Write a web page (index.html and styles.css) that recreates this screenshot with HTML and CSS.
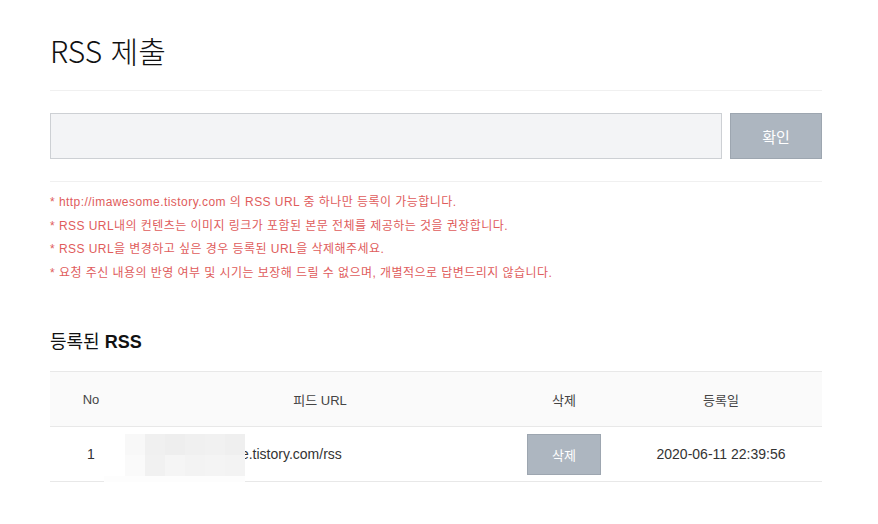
FILE: index.html
```html
<!DOCTYPE html>
<html lang="ko">
<head>
<meta charset="utf-8">
<title>RSS 제출</title>
<link rel="stylesheet" href="styles.css">
</head>
<body>
<div class="page">
  <h1 class="title">RSS 제출</h1>
  <div class="form-row">
    <input class="url-input" type="text">
    <button class="btn-confirm">확인</button>
  </div>
  <ul class="notes">
    <li>* http://imawesome.tistory.com 의 RSS URL 중 하나만 등록이 가능합니다.</li>
    <li>* RSS URL내의 컨텐츠는 이미지 링크가 포함된 본문 전체를 제공하는 것을 권장합니다.</li>
    <li>* RSS URL을 변경하고 싶은 경우 등록된 URL을 삭제해주세요.</li>
    <li>* 요청 주신 내용의 반영 여부 및 시기는 보장해 드릴 수 없으며, 개별적으로 답변드리지 않습니다.</li>
  </ul>
  <h2 class="subtitle">등록된 <span class="latin">RSS</span></h2>
  <table class="rss-table">
    <colgroup>
      <col class="c-no"><col class="c-url"><col class="c-del"><col class="c-date">
    </colgroup>
    <thead>
      <tr><th>No</th><th>피드 URL</th><th>삭제</th><th>등록일</th></tr>
    </thead>
    <tbody>
      <tr>
        <td>1</td>
        <td class="url-cell">http://imawesome.tistory.com/rss
          <div class="mosaic">
            <span class="m1"></span><span class="m2"></span><span class="m3"></span><span class="m4"></span><span class="m5"></span><span class="m6"></span>
            <span class="m7"></span><span class="m8"></span><span class="m9"></span><span class="m10"></span><span class="m11"></span><span class="m12"></span>
          </div>
          <div class="mosaic-low"></div>
        </td>
        <td><button class="btn-del">삭제</button></td>
        <td>2020-06-11 22:39:56</td>
      </tr>
    </tbody>
  </table>
</div>
</body>
</html>
```
FILE: styles.css
```css
* { box-sizing: border-box; }
html, body { margin: 0; padding: 0; background: #fff; }
body {
  font-family: "Liberation Sans", "Noto Sans CJK KR", sans-serif;
  color: #333;
}
.page {
  padding: 0 56px 0 50px;
}
.title {
  margin: 0;
  padding: 28px 0 18px;
  font-family: "Noto Sans CJK KR", sans-serif;
  font-weight: 300;
  font-size: 30px;
  line-height: 44px;
  color: #111;
  border-bottom: 1px solid #f0f0f0;
}
.form-row {
  display: flex;
  gap: 8px;
  padding: 22px 0 22px;
  border-bottom: 1px solid #f0f0f0;
}
.url-input {
  flex: 1;
  height: 46px;
  margin: 0;
  border: 1px solid #cdd0d4;
  background: #f3f4f6;
  outline: none;
}
.btn-confirm {
  width: 92px;
  height: 46px;
  margin: 0;
  border: 1px solid #9da6b0;
  background: #adb6c0;
  color: #fff;
  font-family: "Noto Sans CJK KR", sans-serif;
  font-size: 15px;
  cursor: pointer;
}
.notes {
  list-style: none;
  margin: 0;
  padding: 9px 0 0;
  color: #e05c5c;
  font-size: 12px;
  line-height: 23.5px;
  letter-spacing: 0.45px;
}
.subtitle {
  margin: 0;
  padding: 41px 0 15px;
  font-family: "Noto Sans CJK KR", sans-serif;
  font-weight: 400;
  font-size: 18px;
  line-height: 28px;
  color: #111;
}
.subtitle .latin {
  font-family: "Liberation Sans", sans-serif;
  font-weight: 700;
}
.rss-table {
  width: 100%;
  border-collapse: collapse;
  table-layout: fixed;
  font-size: 14px;
}
.c-no { width: 82px; }
.c-url { width: 376px; }
.c-del { width: 112px; }
.c-date { width: 202px; }
.rss-table th {
  height: 55px;
  background: #fafafa;
  border-top: 1px solid #e8e8e8;
  border-bottom: 1px solid #e8e8e8;
  font-weight: 400;
  font-size: 13px;
  color: #444;
  text-align: center;
  padding: 0;
}
.rss-table td {
  height: 55px;
  border-bottom: 1px solid #e8e8e8;
  text-align: center;
  padding: 0;
  color: #333;
}
.rss-table td.url-cell {
  position: relative;
  text-align: left;
  padding-left: 7px;
}
.mosaic {
  position: absolute;
  left: -7px;
  top: 7px;
  width: 120px;
  height: 42px;
  display: grid;
  grid-template-columns: repeat(6, 1fr);
  grid-template-rows: repeat(2, 1fr);
}
.mosaic span { display: block; }
.m1 { background: #f8f8f8; }
.m2 { background: #f0f0f0; }
.m3 { background: #eeeeee; }
.m4 { background: #f0f0f0; }
.m5 { background: #f1f1f1; }
.m6 { background: #efefef; }
.m7 { background: #fafafa; }
.m8 { background: #f1f1f1; }
.m9 { background: #f5f5f5; }
.m10 { background: #f3f3f3; }
.m11 { background: #f4f4f4; }
.m12 { background: #f3f3f3; }
.mosaic-low {
  position: absolute;
  left: -28px;
  top: 49px;
  width: 141px;
  height: 21px;
  background: #fdfdfd;
}
.btn-del {
  width: 74px;
  height: 41px;
  margin: 0;
  border: 1px solid #9da6b0;
  background: #adb6c0;
  color: #fff;
  font-family: "Noto Sans CJK KR", sans-serif;
  font-size: 13px;
  cursor: pointer;
}
```
